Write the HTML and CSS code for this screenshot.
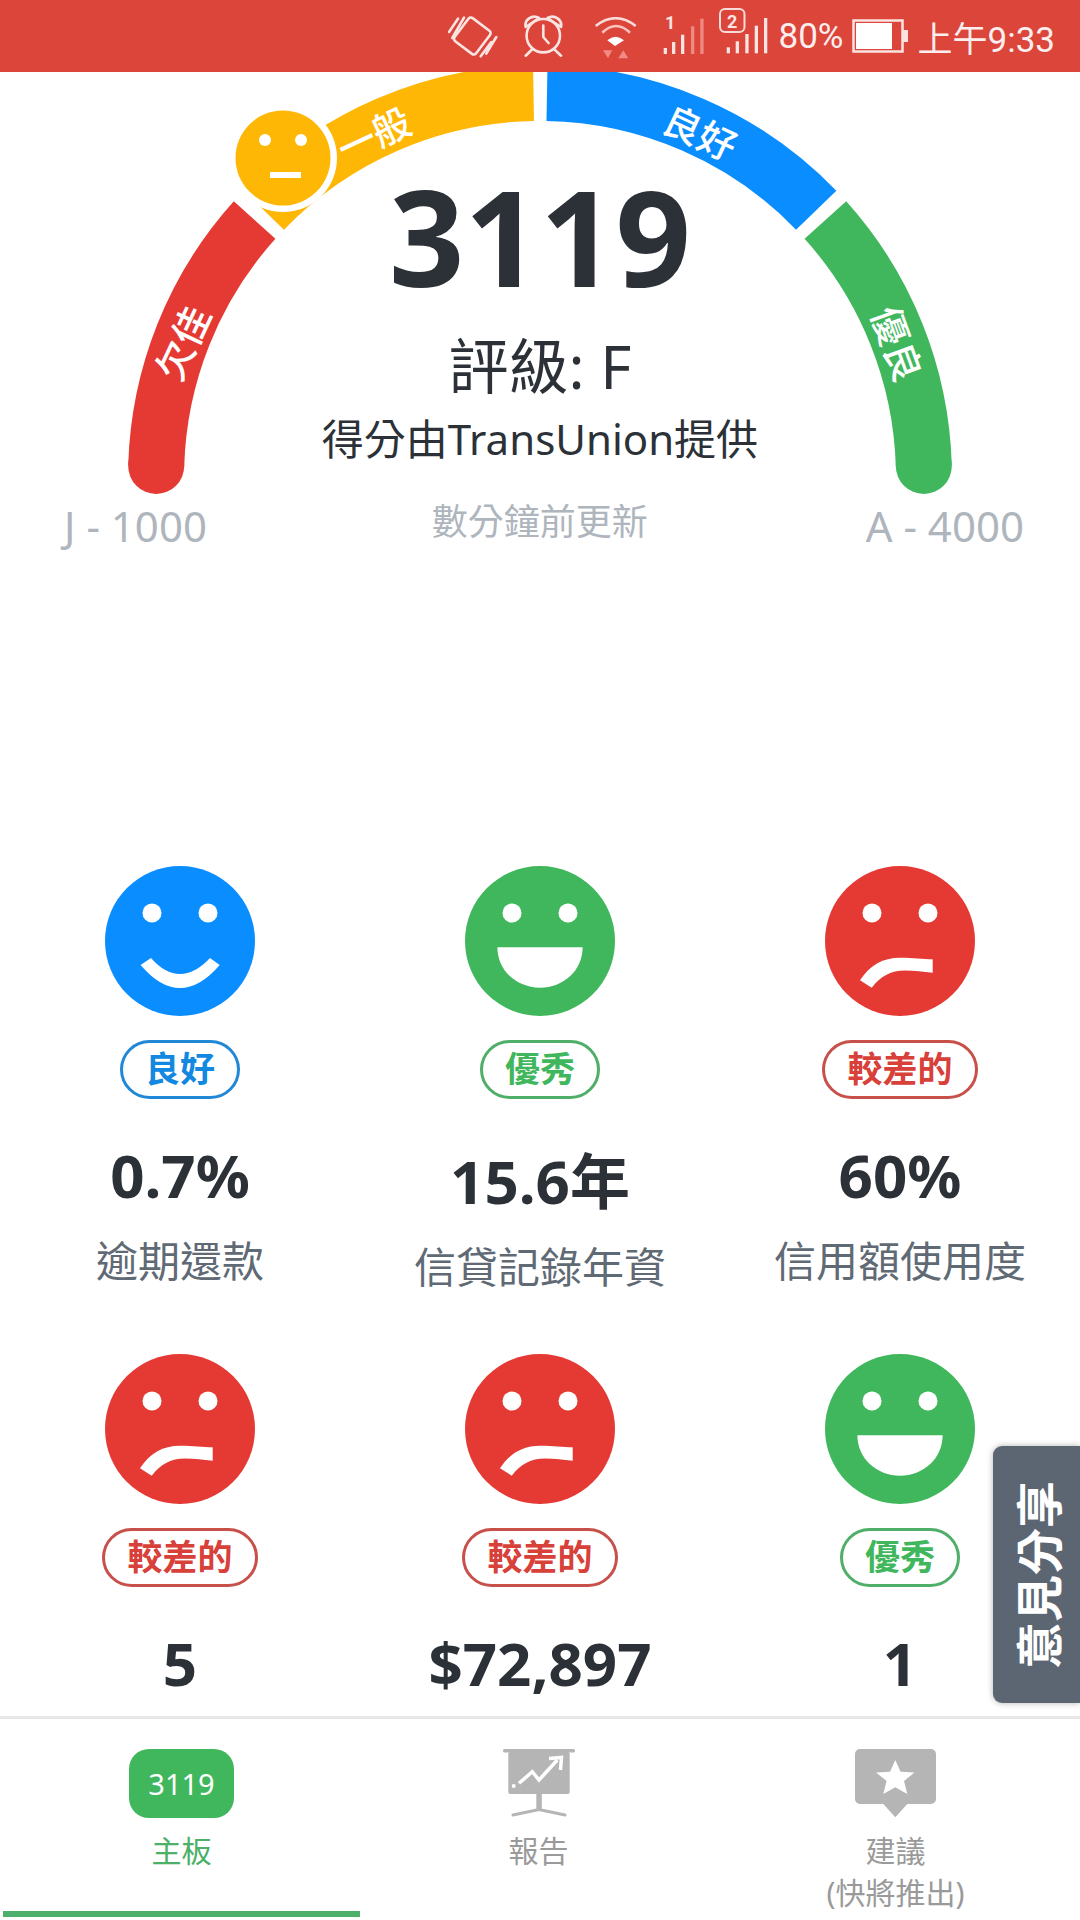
FILE: index.html
```html
<!DOCTYPE html>
<html lang="zh-Hant">
<head>
    <meta charset="UTF-8">
    <meta name="viewport" content="width=device-width, initial-scale=1.0">
    <title>3119</title>
    <link rel="stylesheet" href="styles.css">
</head>
<body>

    <!-- Face icons -->
    <svg class="defs" width="0" height="0">
        <symbol id="face-smile" viewBox="0 0 150 150">
            <circle cx="75" cy="75" r="75" fill="#0a8dff"/>
            <circle cx="47" cy="47" r="9.5" fill="#fff"/>
            <circle cx="103" cy="47" r="9.5" fill="#fff"/>
            <path d="M35.6 99Q55 122 75 122Q95 122 114.7 99L105 92Q90 108 75 108Q60 108 46 92Z" fill="#fff"/>
        </symbol>
        <symbol id="face-happy" viewBox="0 0 150 150">
            <circle cx="75" cy="75" r="75" fill="#41b75d"/>
            <circle cx="47" cy="47" r="9.5" fill="#fff"/>
            <circle cx="103" cy="47" r="9.5" fill="#fff"/>
            <path d="M32.4 81.3H117.6C117.6 105 98 121.7 75 121.7C52 121.7 32.4 105 32.4 81.3Z" fill="#fff"/>
        </symbol>
        <symbol id="face-sad" viewBox="0 0 150 150">
            <circle cx="75" cy="75" r="75" fill="#e53a34"/>
            <circle cx="47" cy="47" r="9.5" fill="#fff"/>
            <circle cx="103" cy="47" r="9.5" fill="#fff"/>
            <path d="M35 114.3C45 99 58 91.7 75 91.7C88 91.7 98 93 107.7 93.3V106.7C98 106 90 104.5 80 104.5C66 104.5 56 110 46.7 121.7Z" fill="#fff"/>
        </symbol>
    </svg>

    <div class="status-bar">
        <svg class="st-vibrate" width="50" height="46" viewBox="0 0 50 46" fill="none" stroke="#f9e4e2" stroke-width="2.6" stroke-linecap="round">
            <rect x="10.800" y="8.500" width="27" height="29" rx="3" transform="rotate(37 24.300 23)"/>
            <path d="M1 19L10 5.700M4.300 25L16 4.700M48.300 24L38.300 40.700M43.300 29L32.700 43.300"/>
        </svg>
        <svg class="st-alarm" width="39" height="44" viewBox="0 0 39 44" fill="none" stroke="#f9e4e2" stroke-width="2.6" stroke-linecap="round" stroke-linejoin="round">
            <circle cx="19.300" cy="21.700" r="16.700"/>
            <path d="M19.300 11.500V23L24.500 29M1.700 13C0 6 8 0 15 4ZM37 13C38.600 6 30.600 0 23.600 4ZM1.700 41.700L8 35.500M37 41.700L30.500 35.500"/>
        </svg>
        <svg class="st-wifi" width="44" height="42" viewBox="0 0 44 42" fill="none">
            <path d="M1.700 9Q21.700 -6.500 41.700 9" stroke="#fbdcd9" stroke-width="2.600"/>
            <path d="M8.300 15.700Q22 2.300 36 15.700" stroke="#f9c4bf" stroke-width="2.600"/>
            <path d="M13.300 23.300Q21.700 16 30 23.300L21 29Z" fill="#fff"/>
            <path d="M9 33.300H18.300L14 41.300ZM24.300 41.300H34.300L29.300 33.300Z" fill="#f08a82"/>
        </svg>
        <svg class="st-sim-one" width="42" height="44" viewBox="0 -3 42 44">
            <text class="sim-num" x="2" y="14.700">1</text>
            <rect x="0.700" y="34" width="3.300" height="6" fill="#f9e4e2"/>
            <rect x="9" y="28" width="3.300" height="12" fill="#f9e4e2"/>
            <rect x="18" y="20.700" width="3.300" height="19.300" fill="#f9e4e2"/>
            <rect x="28" y="12.300" width="3.300" height="27.700" fill="#ee8a82"/>
            <rect x="37.300" y="4.700" width="3.300" height="35.300" fill="#ee8a82"/>
        </svg>
        <svg class="st-sim-two" width="49" height="46" viewBox="0 0 49 46">
            <rect x="1" y="1" width="24.500" height="23" rx="5" fill="none" stroke="#f9dcd9" stroke-width="2"/>
            <text class="sim-num" x="8" y="19.500">2</text>
            <rect x="7.700" y="39.300" width="3.300" height="6" fill="#f9e4e2"/>
            <rect x="16.700" y="33.300" width="3.300" height="12" fill="#f9e4e2"/>
            <rect x="26.300" y="26" width="3.300" height="19.300" fill="#f9e4e2"/>
            <rect x="35.700" y="17.700" width="3.300" height="27.600" fill="#f9e4e2"/>
            <rect x="45" y="10" width="3.300" height="35.300" fill="#f9e4e2"/>
        </svg>
        <span class="st-text">80%</span>
        <svg class="st-battery" width="56" height="34" viewBox="0 0 56 34">
            <rect x="1.500" y="1.500" width="49" height="31" fill="none" stroke="#f9e4e2" stroke-width="2.500"/>
            <rect x="4" y="4" width="36" height="26" fill="#fff"/>
            <rect x="51" y="11" width="5" height="12" fill="#f9e4e2"/>
        </svg>
        <span class="st-text">上午9:33</span>
    </div>

    <div class="content">
        <div class="gauge">
            <svg class="gauge-arc" width="1080" height="540" viewBox="0 72 1080 540" fill="none">
                <path d="M156.200 466A384 384 0 0 1 254.600 220" stroke="#e53a34" stroke-width="56"/>
                <circle cx="156.200" cy="466" r="28" fill="#e53a34"/>
                <path d="M263.800 210.200A384 384 0 0 1 533.500 93" stroke="#ffb705" stroke-width="56"/>
                <path d="M547 93A384 384 0 0 1 816.200 210.200" stroke="#0a8dff" stroke-width="56"/>
                <path d="M825.400 220A384 384 0 0 1 923.800 466" stroke="#41b75d" stroke-width="56"/>
                <circle cx="923.800" cy="466" r="28" fill="#41b75d"/>
                <text class="arc-label" x="181" y="342" transform="rotate(-65 181 342)">欠佳</text>
                <text class="arc-label" x="373" y="133" transform="rotate(-25 373 133)">一般</text>
                <text class="arc-label" x="701" y="131" transform="rotate(25 701 131)">良好</text>
                <text class="arc-label" x="899" y="343" transform="rotate(70 899 343)">優良</text>
                <!-- marker face -->
                <circle cx="283" cy="158" r="54" fill="#fff"/>
                <circle cx="283" cy="158" r="47.500" fill="#ffb705"/>
                <circle cx="265" cy="140" r="6" fill="#fff"/>
                <circle cx="301" cy="140" r="6" fill="#fff"/>
                <rect x="270" y="172" width="31" height="6" fill="#fff"/>
            </svg>
            <div class="score">3119</div>
            <div class="grade">評級: F</div>
            <div class="provider">得分由TransUnion提供</div>
            <div class="scale">
                <span class="scale-end">J - 1000</span>
                <span class="updated">數分鐘前更新</span>
                <span class="scale-end">A - 4000</span>
            </div>
        </div>

        <div class="factors">
            <div class="factor">
                <svg class="face"><use href="#face-smile"/></svg>
                <span class="pill pill-blue">良好</span>
                <div class="value">0.7%</div>
                <div class="name">逾期還款</div>
            </div>
            <div class="factor">
                <svg class="face"><use href="#face-happy"/></svg>
                <span class="pill pill-green">優秀</span>
                <div class="value">15.6年</div>
                <div class="name">信貸記錄年資</div>
            </div>
            <div class="factor">
                <svg class="face"><use href="#face-sad"/></svg>
                <span class="pill pill-red">較差的</span>
                <div class="value">60%</div>
                <div class="name">信用額使用度</div>
            </div>
            <div class="factor">
                <svg class="face"><use href="#face-sad"/></svg>
                <span class="pill pill-red">較差的</span>
                <div class="value">5</div>
            </div>
            <div class="factor">
                <svg class="face"><use href="#face-sad"/></svg>
                <span class="pill pill-red">較差的</span>
                <div class="value">$72,897</div>
            </div>
            <div class="factor">
                <svg class="face"><use href="#face-happy"/></svg>
                <span class="pill pill-green">優秀</span>
                <div class="value">1</div>
            </div>
        </div>

        <div class="feedback"><span>意見分享</span></div>
    </div>

    <div class="tab-bar">
        <div class="tab active">
            <div class="tab-badge">3119</div>
            <div class="tab-label">主板</div>
        </div>
        <div class="tab">
            <svg class="tab-icon" width="72" height="69" viewBox="0 0 72 69">
                <rect x="0" y="0" width="72" height="3.500" rx="1.500" fill="#b5b5b5"/>
                <rect x="5.300" y="3" width="61.400" height="42" rx="2" fill="#b5b5b5"/>
                <rect x="33.300" y="44" width="5.500" height="18" fill="#b5b5b5"/>
                <path d="M10 66L36 60.500L62 66" fill="none" stroke="#b5b5b5" stroke-width="3" stroke-linecap="round"/>
                <circle cx="10.700" cy="37" r="2" fill="#fff"/>
                <path d="M16 34.300L29.300 22.700L36 31L54.300 11" fill="none" stroke="#fff" stroke-width="3.500"/>
                <path d="M46 9.500L58.500 8.500L57.500 21" fill="none" stroke="#fff" stroke-width="3.500"/>
            </svg>
            <div class="tab-label">報告</div>
        </div>
        <div class="tab">
            <svg class="tab-icon" width="81" height="69" viewBox="0 0 81 69">
                <path d="M5 0H76A5 5 0 0 1 81 5V50A5 5 0 0 1 76 55H52.300L40.300 68.300L28.300 55H5A5 5 0 0 1 0 50V5A5 5 0 0 1 5 0Z" fill="#b5b5b5"/>
                <path d="M40.300 11L45.600 22.800L59.500 23.500L49 32L52.300 45L40.300 38.300L28.300 45L31.600 32L21 23.500L35 22.800Z" fill="#fff"/>
            </svg>
            <div class="tab-label">建議<br>(快將推出)</div>
        </div>
    </div>

</body>
</html>
```

FILE: styles.css
```css
body {
    margin: 0;
    width: 1080px;
    height: 1920px;
    display: flex;
    flex-direction: column;
    overflow: hidden;
    background-color: #fff;
    font-family: "Noto Sans", "Noto Sans CJK TC", sans-serif;
    color: #2c3138;
}

.defs {
    position: absolute;
}

/* Status bar */
.status-bar {
    flex: none;
    height: 72px;
    display: flex;
    align-items: center;
    justify-content: flex-end;
    padding-right: 25px;
    background-color: #dc453a;
}

.st-vibrate { margin-right: 26px; }
.st-alarm { margin-right: 31px; }
.st-wifi { margin-right: 25px; margin-top: 3px; }
.st-sim-one { margin-right: 14px; margin-bottom: 7px; }
.st-sim-two { margin-right: 11px; margin-bottom: 10px; }
.st-battery { margin: 0 10px 0 8px; }

.st-text {
    font-family: Roboto, "Noto Sans CJK TC", sans-serif;
    font-size: 35px;
    color: #fbeeee;
}

.sim-num {
    font-family: Roboto, sans-serif;
    font-size: 18px;
    font-weight: 700;
    fill: #f9e4e2;
}

/* Main content */
.content {
    position: relative;
    flex: 1;
    min-height: 0;
    overflow: hidden;
}

/* Gauge */
.gauge {
    position: relative;
    height: 794px;
    padding-top: 98px;
    box-sizing: border-box;
    text-align: center;
}

.gauge-arc {
    position: absolute;
    top: 0;
    left: 0;
}

.arc-label {
    font-family: "Noto Sans CJK TC", sans-serif;
    font-size: 38px;
    font-weight: 500;
    fill: #fff;
    text-anchor: middle;
    dominant-baseline: central;
}

.score {
    position: relative;
    font-size: 132px;
    font-weight: 700;
    line-height: 133px;
}

.grade {
    position: relative;
    font-size: 60px;
    line-height: 70px;
    margin-top: 28px;
}

.provider {
    position: relative;
    font-size: 42px;
    line-height: 50px;
    margin-top: 13px;
}

.scale {
    position: relative;
    display: flex;
    justify-content: space-between;
    align-items: center;
    padding: 0 56px 0 64px;
    margin-top: 37px;
    line-height: 50px;
    color: #aeb5bd;
}

.scale-end {
    font-size: 42px;
}

.updated {
    font-size: 36px;
    margin: -9px 0 0 7px;
}

/* Factor cards */
.factors {
    display: grid;
    grid-template-columns: repeat(3, 360px);
    row-gap: 59px;
}

.factor {
    display: flex;
    flex-direction: column;
    align-items: center;
}

.face {
    width: 150px;
    height: 150px;
}

.pill {
    box-sizing: border-box;
    height: 59px;
    padding: 0 22px;
    margin-top: 24px;
    border: 3px solid;
    border-radius: 30px;
    font-size: 35px;
    font-weight: 700;
    line-height: 52px;
}

.pill-blue { border-color: #2188d8; color: #1288e0; }
.pill-green { border-color: #4fae68; color: #41b75d; }
.pill-red { border-color: #c8504a; color: #d8403a; }

.value {
    margin-top: 35px;
    font-size: 60px;
    font-weight: 700;
}

.name {
    margin-top: 12px;
    font-size: 42px;
    color: #5f6a75;
}

/* Feedback tab */
.feedback {
    position: absolute;
    top: 1374px;
    right: 0;
    width: 87px;
    height: 257px;
    display: flex;
    align-items: center;
    justify-content: center;
    border-radius: 9px 0 0 9px;
    background-color: #5c6673;
    box-shadow: 0 0 6px rgba(0, 0, 0, 0.3);
    color: #fff;
    font-size: 47px;
    font-weight: 700;
}

.feedback span {
    writing-mode: vertical-rl;
    text-orientation: sideways;
    transform: rotate(180deg);
    line-height: 1;
    margin-left: 6px;
}

/* Bottom tabs */
.tab-bar {
    flex: none;
    box-sizing: border-box;
    height: 204px;
    display: grid;
    grid-template-columns: repeat(3, 357px);
    padding: 0 6px 0 3px;
    border-top: 3px solid #e8e8e8;
}

.tab {
    display: flex;
    flex-direction: column;
    align-items: center;
    padding-top: 30px;
    color: #9a9a9a;
}

.tab.active {
    color: #4cb068;
    border-bottom: 6px solid #4caf6a;
    height: 198px;
    box-sizing: border-box;
}

.tab-badge {
    width: 105px;
    height: 69px;
    border-radius: 20px;
    background-color: #41b75d;
    color: #fff;
    font-size: 29px;
    line-height: 69px;
    text-align: center;
}

.tab-icon {
    display: block;
}

.tab-label {
    margin-top: 12px;
    font-size: 30px;
    line-height: 42px;
    text-align: center;
}
```
